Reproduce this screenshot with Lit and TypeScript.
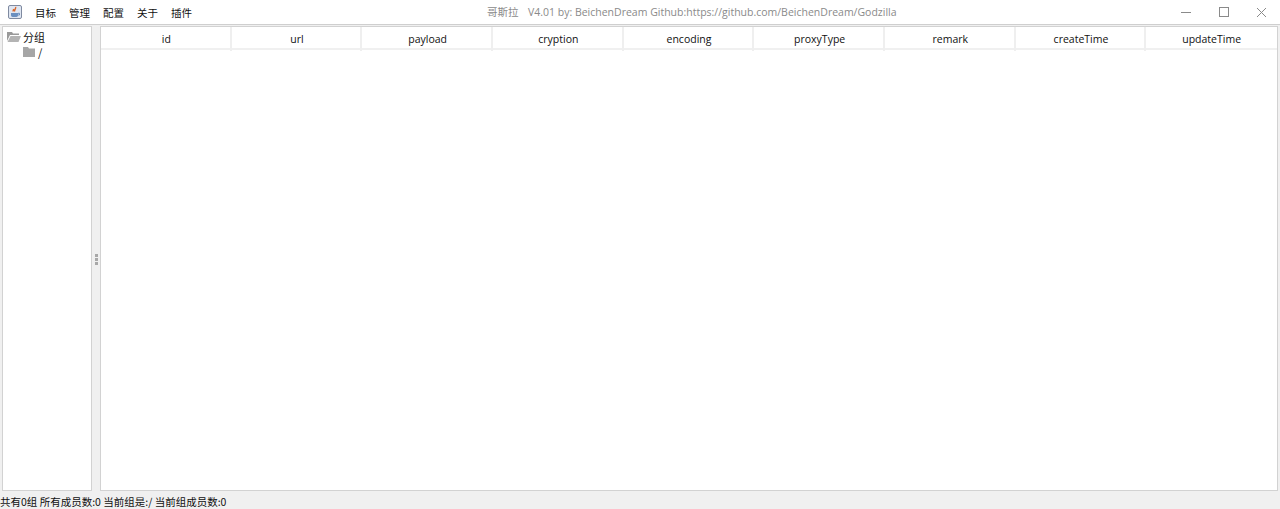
import { LitElement, html, css } from "lit";
import { customElement } from "lit/decorators.js";

const COLS = ["id", "url", "payload", "cryption", "encoding", "proxyType", "remark", "createTime", "updateTime"];
const MENUS = ["目标", "管理", "配置", "关于", "插件"];

@customElement("app-root")
export class AppRoot extends LitElement {
  static styles = css`
    :host {
      display: flex;
      flex-direction: column;
      width: 1280px;
      height: 509px;
      overflow: hidden;
      background: #f0f0f0;
      font-family: "Noto Sans CJK SC", "Open Sans", sans-serif;
      font-size: 12px;
      color: #111;
    }
    .titlebar {
      height: 24px;
      flex: none;
      background: #fff;
      border-bottom: 1px solid #cfcfcf;
      box-sizing: content-box;
      display: flex;
      align-items: center;
      position: relative;
    }
    .appicon {
      width: 14px;
      height: 14px;
      margin-left: 8px;
      flex: none;
      display: block;
    }
    .menus {
      display: flex;
      gap: 13px;
      margin-left: 13px;
      font-size: 10.5px;
    }
    .title {
      position: absolute;
      left: 487px;
      top: 0;
      line-height: 25px;
      font-size: 10.5px;
      color: #8a8a8a;
      white-space: nowrap;
      font-family: "Open Sans", "Noto Sans CJK SC", sans-serif;
      display: flex;
    }
    .title .zh { width: 41px; flex: none; }
    .winbtns {
      margin-left: auto;
      display: flex;
    }
    .winbtn {
      width: 38px;
      height: 24px;
      display: block;
    }
    .body {
      flex: 1;
      display: flex;
      min-height: 0;
      padding: 1px 2px 0 2px;
    }
    .tree {
      width: 88px;
      flex: none;
      background: #fff;
      border: 1px solid #d2d2d2;
      padding-top: 2px;
      font-size: 11px;
    }
    .node {
      display: flex;
      align-items: center;
      height: 16px;
      gap: 2px;
    }
    .node.root { padding-left: 4px; }
    .node.child { padding-left: 19px; margin-top: -1px; }
    .node svg { width: 14px; height: 12px; display: block; flex: none; }
    .divider {
      width: 8px;
      flex: none;
      display: flex;
      flex-direction: column;
      align-items: center;
      justify-content: center;
      gap: 1px;
      padding-top: 2px;
    }
    .divider i {
      width: 3px;
      height: 3px;
      background: #a8a8a8;
      display: block;
    }
    .table {
      flex: 1;
      background: #fff;
      border: 1px solid #d2d2d2;
      min-width: 0;
    }
    .head {
      display: grid;
      grid-template-columns: repeat(9, 1fr);
      height: 21px;
      border-bottom: 2px solid #f0f0f0;
      box-sizing: content-box;
    }
    .head div {
      text-align: center;
      line-height: 24px;
      font-size: 10.5px;
      padding-left: 2px;
      border-right: 2px solid #efefef;
      font-family: "Open Sans", sans-serif;
    }
    .head div:last-child { border-right: none; padding-left: 0; }
    .status {
      height: 18px;
      flex: none;
      line-height: 21px;
      font-size: 10.5px;
      white-space: pre;
      color: #111;
    }
  `;

  render() {
    return html`
      <div class="titlebar">
        <svg class="appicon" viewBox="0 0 14 14">
          <rect x="0.5" y="0.5" width="13" height="13" rx="1.5" fill="#dfe6f2" stroke="#7f8aa0" />
          <path d="M7.5 2c1 1.5-1.5 2.5-.8 4.5M5.5 4c.3 1-.8 1.500-.2 2.500" stroke="#d9662a" stroke-width="1.400" fill="none" />
          <path d="M3 8h7v2.500a2 2 0 0 1-2 1.500h-3a2 2 0 0 1-2-1.500z" fill="#6a8fc0" />
          <path d="M10 8.300h1.500v1.700h-1.500" stroke="#6a8fc0" fill="none" />
        </svg>
        <div class="menus">${MENUS.map((m) => html`<span>${m}</span>`)}</div>
        <div class="title"><span class="zh">哥斯拉</span><span>V4.01 by: BeichenDream Github:https://github.com/BeichenDream/Godzilla</span></div>
        <div class="winbtns">
          <svg class="winbtn" viewBox="0 0 38 24">
            <path d="M15 12.500h10" stroke="#8a8a8a" fill="none" />
          </svg>
          <svg class="winbtn" viewBox="0 0 38 24">
            <rect x="15.500" y="7.500" width="9" height="9" stroke="#8a8a8a" fill="none" />
          </svg>
          <svg class="winbtn" viewBox="0 0 38 24">
            <path d="M15 8l9 9M24 8l-9 9" stroke="#8a8a8a" fill="none" />
          </svg>
        </div>
      </div>
      <div class="body">
        <div class="tree">
          <div class="node root">
            <svg viewBox="0 0 14 12">
              <path d="M0 1h5l1 1.500h6v1.500H3L0 10z" fill="#9a9a9a" />
              <path d="M3.500 5H14l-2.500 6H0.500z" fill="#b4b4b4" />
            </svg>
            <span>分组</span>
          </div>
          <div class="node child">
            <svg viewBox="0 0 14 12">
              <path d="M1 1h5l1 1.500h6V11H1z" fill="#a6a6a6" />
            </svg>
            <span>/</span>
          </div>
        </div>
        <div class="divider"><i></i><i></i><i></i></div>
        <div class="table">
          <div class="head">${COLS.map((c) => html`<div>${c}</div>`)}</div>
        </div>
      </div>
      <div class="status">共有0组 所有成员数:0 当前组是:/ 当前组成员数:0</div>
    `;
  }
}
